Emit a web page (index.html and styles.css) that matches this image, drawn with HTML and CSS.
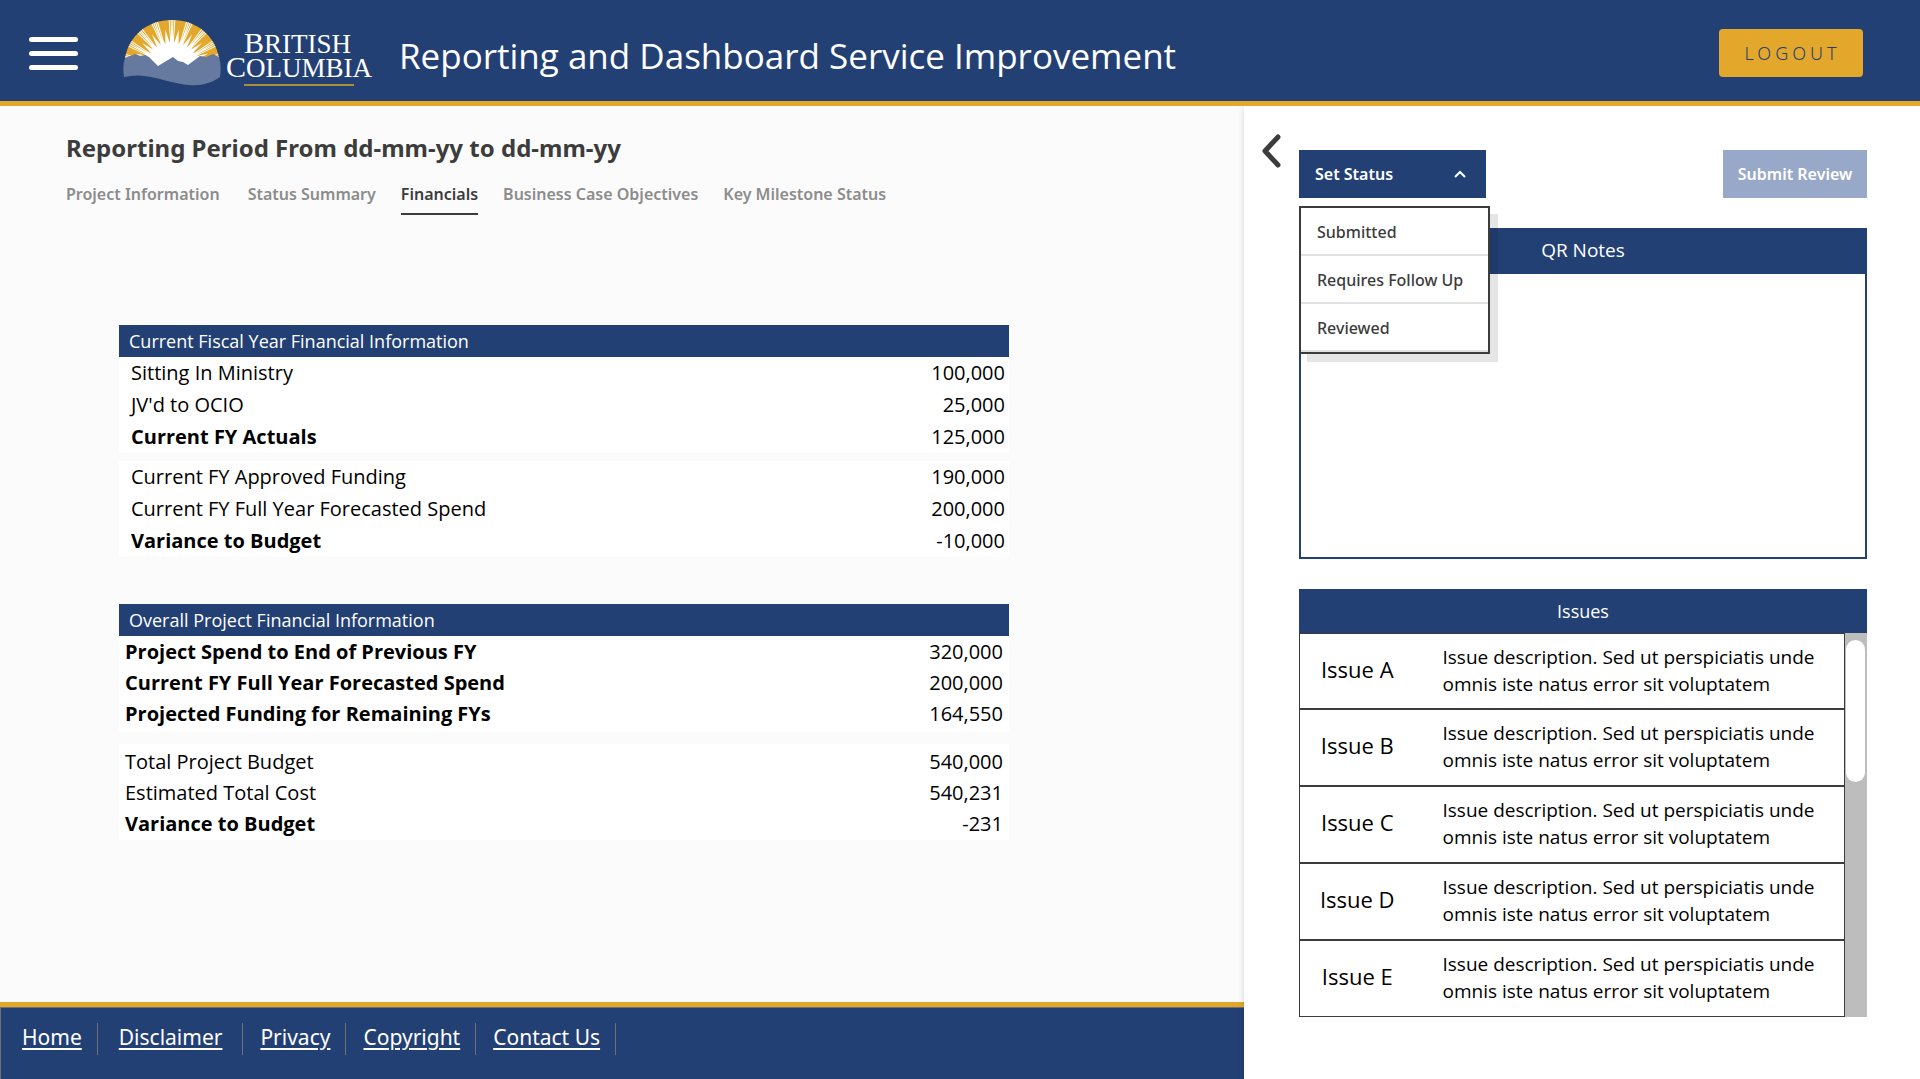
FILE: index.html
```html
<!DOCTYPE html>
<html lang="en">
<head>
<meta charset="utf-8">
<meta name="viewport" content="width=device-width, initial-scale=1">
<title>Reporting and Dashboard Service Improvement</title>
<link rel="stylesheet" href="styles.css">
</head>
<body>
<header class="topbar">
  <button class="menu-button" type="button" aria-label="Menu"><span class="bar"></span><span class="bar"></span><span class="bar"></span></button>
  <svg class="logo" viewBox="0 0 252 72" role="img" aria-label="British Columbia">
    <defs>
      <clipPath id="sky"><path d="M2 44C6 22 24 6 49 6s43 16 47 38l-12 12H14z"/></clipPath>
      <g id="bundle">
        <path stroke="#fff" fill="none" d="M-1-22L-3-50M0-22L-1-50M0-22L1-50M1-22L3-50"/>
        <path fill="#fff" d="M-4-20L0-34L4-20z"/>
      </g>
      <path id="ray" fill="#fff" d="M-3-20L0-39L3-20z"/>
    </defs>
    <g clip-path="url(#sky)">
      <rect width="98" height="60" fill="#e3a82b"/>
      <g transform="translate(49 54)">
        <circle r="25" fill="#fff"/>
        <use href="#bundle"/>
        <use href="#bundle" transform="rotate(-21)"/><use href="#bundle" transform="rotate(21)"/>
        <use href="#bundle" transform="rotate(-41)"/><use href="#bundle" transform="rotate(41)"/>
        <use href="#bundle" transform="rotate(-60)"/><use href="#bundle" transform="rotate(60)"/>
        <use href="#bundle" transform="rotate(-77)"/><use href="#bundle" transform="rotate(77)"/>
        <use href="#ray" transform="rotate(-10)"/><use href="#ray" transform="rotate(10)"/>
        <use href="#ray" transform="rotate(-31)"/><use href="#ray" transform="rotate(31)"/>
        <use href="#ray" transform="rotate(-50)"/><use href="#ray" transform="rotate(50)"/>
        <use href="#ray" transform="rotate(-68)"/><use href="#ray" transform="rotate(68)"/>
      </g>
    </g>
    <path fill="#667aa0" d="M2 44l10-4 5 2 5-1 4 2 9 9 15-9 5 4 5 1 5 3 12-9 6 1 7-3 6 3c2 6 2 13 1 20-8 6-19 9-31 8-14-1-26-6-38-8-9-2-18-2-27 0-1-7-1-13 1-19z"/>
    <text class="logo-text"><tspan class="cap" x="121" y="39">B</tspan><tspan class="small">RITISH</tspan><tspan class="cap" x="103" y="63">C</tspan><tspan class="small">OLUMBIA</tspan></text>
    <rect x="121" y="70" width="110" height="2" fill="#ae8a3c"/>
  </svg>
  <h1 class="title">Reporting and Dashboard Service Improvement</h1>
  <button class="logout" type="button">LOGOUT</button>
</header>
<div class="page">
  <div class="left">
    <main class="content">
      <h2 class="period">Reporting Period From dd-mm-yy to dd-mm-yy</h2>
      <nav class="tabs" aria-label="Report sections">
        <a href="#info">Project Information</a>
        <a href="#status">Status Summary</a>
        <a class="active" href="#financials" aria-current="page">Financials</a>
        <a href="#objectives">Business Case Objectives</a>
        <a href="#milestones">Key Milestone Status</a>
      </nav>
      <div class="tables">
        <table class="finance">
          <thead><tr><th colspan="2">Current Fiscal Year Financial Information</th></tr></thead>
          <tbody>
            <tr><td>Sitting In Ministry</td><td>100,000</td></tr>
            <tr><td>JV'd to OCIO</td><td>25,000</td></tr>
            <tr class="strong"><td>Current FY Actuals</td><td>125,000</td></tr>
          </tbody>
          <tbody class="part">
            <tr><td>Current FY Approved Funding</td><td>190,000</td></tr>
            <tr><td>Current FY Full Year Forecasted Spend</td><td>200,000</td></tr>
            <tr class="strong"><td>Variance to Budget</td><td>-10,000</td></tr>
          </tbody>
        </table>
        <table class="finance overall">
          <thead><tr><th colspan="2">Overall Project Financial Information</th></tr></thead>
          <tbody>
            <tr class="strong"><td>Project Spend to End of Previous FY</td><td>320,000</td></tr>
            <tr class="strong"><td>Current FY Full Year Forecasted Spend</td><td>200,000</td></tr>
            <tr class="strong"><td>Projected Funding for Remaining FYs</td><td>164,550</td></tr>
          </tbody>
          <tbody class="part">
            <tr><td>Total Project Budget</td><td>540,000</td></tr>
            <tr><td>Estimated Total Cost</td><td>540,231</td></tr>
            <tr class="strong"><td>Variance to Budget</td><td>-231</td></tr>
          </tbody>
        </table>
      </div>
    </main>
    <footer class="footer">
      <a href="#home">Home</a>
      <a href="#disclaimer">Disclaimer</a>
      <a href="#privacy">Privacy</a>
      <a href="#copyright">Copyright</a>
      <a href="#contact">Contact Us</a>
    </footer>
  </div>
  <aside class="review">
    <button class="collapse" type="button" aria-label="Collapse panel"><svg viewBox="0 0 20 34" width="20" height="34"><path d="M17 3L4 17l13 14" fill="none" stroke="#3c3c3c" stroke-width="5" stroke-linecap="round" stroke-linejoin="round"/></svg></button>
    <div class="panel">
      <div class="actions">
        <div class="status">
          <button class="status-button" type="button" aria-haspopup="true" aria-expanded="true">Set Status
            <svg viewBox="0 0 12 8" width="12" height="8"><path d="M1 7l5-5 5 5" fill="none" stroke="#fff" stroke-width="2"/></svg>
          </button>
          <ul class="status-menu">
            <li><button type="button">Submitted</button></li>
            <li><button type="button">Requires Follow Up</button></li>
            <li><button type="button">Reviewed</button></li>
          </ul>
        </div>
        <button class="submit" type="button">Submit Review</button>
      </div>
      <section class="notes">
        <label class="panel-title" for="notes">QR Notes</label>
        <textarea id="notes"></textarea>
      </section>
      <section class="issues">
        <h2 class="panel-title issues-title">Issues</h2>
        <div class="issues-body">
          <table class="issue-list">
            <tr><th scope="row">Issue A</th><td>Issue description. Sed ut perspiciatis unde omnis iste natus error sit voluptatem</td></tr>
            <tr><th scope="row">Issue B</th><td>Issue description. Sed ut perspiciatis unde omnis iste natus error sit voluptatem</td></tr>
            <tr><th scope="row">Issue C</th><td>Issue description. Sed ut perspiciatis unde omnis iste natus error sit voluptatem</td></tr>
            <tr><th scope="row">Issue D</th><td>Issue description. Sed ut perspiciatis unde omnis iste natus error sit voluptatem</td></tr>
            <tr><th scope="row">Issue E</th><td>Issue description. Sed ut perspiciatis unde omnis iste natus error sit voluptatem</td></tr>
          </table>
          <div class="scrollbar"><div class="thumb"></div></div>
        </div>
      </section>
    </div>
  </aside>
</div>
</body>
</html>
```
FILE: styles.css
```css
* { box-sizing: border-box; }
body {
  margin: 0;
  min-height: 100vh;
  display: flex;
  flex-direction: column;
  background: #fbfbfb;
  color: #3c3c3c;
  font-family: "Noto Sans", sans-serif;
}
button { font-family: inherit; border: 0; padding: 0; cursor: pointer; }
h1, h2 { margin: 0; }

.topbar {
  display: flex;
  align-items: center;
  height: 106px;
  padding: 0 57px 0 29px;
  background: #234075;
  border-bottom: 5px solid #e3a82b;
}
.menu-button {
  display: grid;
  gap: 9px;
  width: 49px;
  margin: 5px 45px 0 0;
  background: none;
}
.bar { height: 5px; border-radius: 3px; background: #fff; }
.logo { width: 252px; height: 72px; margin-bottom: 1px; }
.logo-text { fill: #fff; font-family: "Liberation Serif", serif; }
.cap { font-size: 30px; }
.small { font-size: 27px; }
.title {
  margin: 11px 0 0 24px;
  color: #fff;
  font-family: "Open Sans", sans-serif;
  font-size: 35px;
  font-weight: 400;
  line-height: 48px;
}
.logout {
  width: 144px;
  height: 48px;
  margin: 4px 0 0 auto;
  padding-left: 3px;
  border-radius: 4px;
  background: #e3a82b;
  color: #234075;
  font-size: 18px;
  font-weight: 300;
  letter-spacing: 4px;
}

.page { flex: 1; display: flex; }
.left { flex: 1; display: flex; flex-direction: column; }
.content { flex: 1; padding: 26px 66px 40px; }
.period { font-size: 24px; font-weight: 700; line-height: 32px; }
.tabs { display: flex; gap: 25px; margin-top: 19px; }
.tabs a {
  padding-bottom: 8px;
  border-bottom: 2px solid transparent;
  color: #8c8c8c;
  font-size: 16px;
  font-weight: 600;
  line-height: 22px;
  text-decoration: none;
}
.tabs a:first-child { margin-right: 3px; }
.tabs .active { color: #3c3c3c; border-color: #3c3c3c; }
.tables { display: grid; gap: 47px; margin-top: 110px; padding: 0 169px 0 53px; }
.finance { width: 100%; border-spacing: 0; color: #000; font-family: "Open Sans", sans-serif; font-size: 20px; }
.finance th {
  height: 32px;
  padding: 0 10px;
  background: #234075;
  color: #fff;
  font-size: 18px;
  font-weight: 400;
  line-height: 32px;
  text-align: left;
}
.finance td { height: 32px; padding: 0 4px 0 12px; background: #fff; font-weight: 400; line-height: 32px; }
.finance td:last-child { text-align: right; }
.finance .strong td:first-child { font-weight: 700; }
.part tr:first-child td { border-top: 8px solid #fbfbfb; height: 40px; }
.overall td { height: 31px; padding: 0 6px; line-height: 31px; }
.overall tbody:not(.part) tr:last-child td { height: 34px; padding-bottom: 3px; }
.overall .part tr:first-child td { border-top-width: 12px; height: 45px; padding-top: 2px; }
.overall .part tr:last-child td { height: 32px; padding-bottom: 1px; }

.footer {
  display: flex;
  height: 77px;
  padding: 16px 22px 0;
  border-top: 5px solid #e3a82b;
  background: #234075;
  box-shadow: inset 1px 1px #707070;
}
.footer a {
  height: 32px;
  margin-right: 17px;
  padding-right: 15px;
  border-right: 1px solid #707070;
  color: #fff;
  font-size: 21px;
  font-weight: 400;
  line-height: 28px;
  text-underline-offset: 3px;
}
.footer a:first-child { margin-right: 21px; }
.footer a:nth-child(2) { padding-right: 20px; }

.review {
  display: flex;
  align-items: flex-start;
  gap: 18px;
  width: 676px;
  padding: 28px 53px 40px 17px;
  background: #fff;
  box-shadow: 0 3px 6px rgba(0, 0, 0, .16);
  clip-path: inset(0 0 0 -12px);
}
.collapse { height: 34px; width: 20px; background: none; }
.panel { flex: 1; padding-top: 16px; }
.actions { display: flex; justify-content: space-between; }
.status { position: relative; }
.status-button, .submit { height: 48px; background: #234075; color: #fff; font-size: 16px; font-weight: 600; }
.status-button { display: flex; align-items: center; justify-content: space-between; width: 187px; padding: 0 20px 0 16px; }
.submit { width: 144px; background: #98a8c8; }
.status-menu {
  position: absolute;
  top: 56px;
  left: 0;
  width: 191px;
  margin: 0;
  padding: 0;
  border: 2px solid #3c3c3c;
  background: #fff;
  box-shadow: 8px 8px rgba(0, 0, 0, .1);
  list-style: none;
}
.status-menu button {
  width: 100%;
  height: 48px;
  padding: 2px 16px 0;
  border-bottom: 2px solid #e2e2e2;
  background: #fff;
  color: #3c3c3c;
  font-size: 16px;
  font-weight: 500;
  text-align: left;
}
.panel-title {
  display: block;
  padding-bottom: 2px;
  background: #234075;
  color: #fff;
  font-family: "Open Sans", sans-serif;
  font-size: 19px;
  font-weight: 400;
  line-height: 44px;
  text-align: center;
}
.notes { margin-top: 30px; }
.notes textarea { display: block; width: 100%; height: 285px; border: 2px solid #234075; border-top: 0; background: #fff; resize: none; }
.issues { margin-top: 30px; font-family: "Open Sans", sans-serif; }
.issues-title { padding: 0; font-size: 18px; }
.issues-body { display: flex; }
.issue-list { flex: 1; border-collapse: collapse; border: 1px solid #3c3c3c; color: #000; }
.issue-list tr + tr { border-top: 2px solid #3c3c3c; }
.issue-list th { width: 115px; height: 77px; padding: 0 0 4px; font-size: 22px; font-weight: 400; text-align: center; }
.issue-list tr:first-child th { height: 75px; }
.issue-list td { padding: 0 12px 0 28px; font-size: 19px; font-weight: 400; line-height: 27px; }
.scrollbar { width: 22px; padding: 7px 2px 0 1px; background: #bdbdbd; }
.thumb { height: 142px; border-radius: 10px; background: #fff; }
```
